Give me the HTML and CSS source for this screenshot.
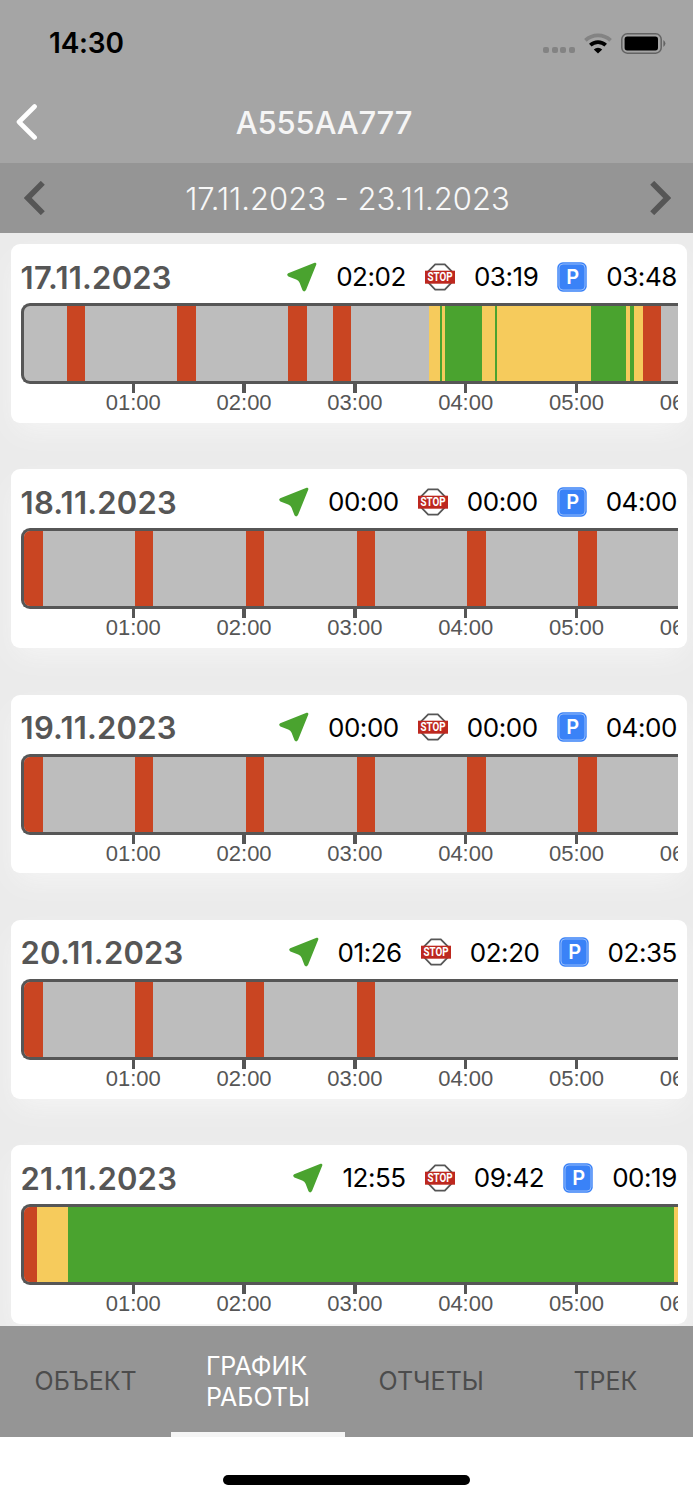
FILE: index.html
```html
<!DOCTYPE html>
<html lang="ru">
<head>
  <meta charset="UTF-8" />
  <meta name="viewport" content="width=device-width, initial-scale=1.0"/>
  <title>График работы</title>
  <link rel="stylesheet" href="styles.css">
</head>
<body>
  <header class="header">
    <div class="status-bar">
      <span class="clock">14:30</span>
      <div class="status-icons">
        <div class="signal"><i></i><i></i><i></i><i></i></div>
        <svg class="wifi" width="28" height="21" viewBox="0 0 28 21">
          <path d="M1.4 7.4 A18.3 18.3 0 0 1 26.6 7.4" fill="none" stroke="#838383" stroke-width="3.7"/>
          <path d="M6.3 12.1 A11.3 11.3 0 0 1 21.7 12.1" fill="none" stroke="#000" stroke-width="3.7"/>
          <path d="M14 20.6 L9.8 16.5 A6.2 6.2 0 0 1 18.2 16.5 Z" fill="#000"/>
        </svg>
        <svg class="battery" width="46" height="21" viewBox="0 0 46 21">
          <rect x="0.8" y="0.8" width="39.4" height="19.4" rx="5.5" fill="none" stroke="#636363" stroke-width="1.5"/>
          <rect x="3.6" y="3.6" width="33.4" height="13.8" rx="2.6" fill="#000"/>
          <path d="M42.4 7 Q46.4 10.5 42.4 14 Z" fill="#636363"/>
        </svg>
      </div>
    </div>
    <div class="title-bar">
      <svg class="back" width="22" height="36" viewBox="0 0 22 36">
        <path d="M18.6 2.5 L3 18 L18.6 33.5" fill="none" stroke="#fff" stroke-width="4.6" stroke-linecap="round" stroke-linejoin="round"/>
      </svg>
      <h1>A555AA777</h1>
    </div>
  </header>

  <div class="date-bar">
    <svg width="21" height="34" viewBox="0 0 21 34">
      <path d="M18.8 1.8 L3.8 17 L18.8 32.2" fill="none" stroke="#565656" stroke-width="5.6"/>
    </svg>
    <span class="period">17.11.2023 - 23.11.2023</span>
    <svg width="21" height="34" viewBox="0 0 21 34">
      <path d="M2.2 1.8 L17.2 17 L2.2 32.2" fill="none" stroke="#565656" stroke-width="5.6"/>
    </svg>
  </div>

  <main class="days" id="days"></main>

  <nav class="tabs">
    <a class="tab"><span>ОБЪЕКТ</span></a>
    <a class="tab active"><span>ГРАФИК<br>РАБОТЫ</span></a>
    <a class="tab"><span>ОТЧЕТЫ</span></a>
    <a class="tab"><span>ТРЕК</span></a>
  </nav>
  <footer class="home"><div class="home-indicator"></div></footer>

  <script>
    // segments: [state, width in px], the rest of the bar stays grey
    const hourly = ["off", 92.3];
    const days = [
      { date: "17.11.2023", move: "02:02", stop: "03:19", park: "03:48", segments: [
        ["off", 43.1], ["alarm", 18.5], ["off", 92.3], ["alarm", 18.5], ["off", 92.3], ["alarm", 18.5],
        ["off", 25.9], ["alarm", 18.5], ["off", 77.6], ["stop", 11.1], ["move", 1.7], ["stop", 3.7],
        ["move", 37], ["stop", 12.6], ["move", 2], ["stop", 94.4], ["move", 34.9], ["stop", 3.8],
        ["move", 3.6], ["stop", 9.3], ["alarm", 18.5]
      ] },
      { date: "18.11.2023", move: "00:00", stop: "00:00", park: "04:00", segments: [
        ["alarm", 19.1], hourly, ["alarm", 18.5], hourly, ["alarm", 18.5], hourly,
        ["alarm", 18.5], hourly, ["alarm", 18.5], hourly, ["alarm", 18.5]
      ] },
      { date: "19.11.2023", move: "00:00", stop: "00:00", park: "04:00", segments: [
        ["alarm", 19.1], hourly, ["alarm", 18.5], hourly, ["alarm", 18.5], hourly,
        ["alarm", 18.5], hourly, ["alarm", 18.5], hourly, ["alarm", 18.5]
      ] },
      { date: "20.11.2023", move: "01:26", stop: "02:20", park: "02:35", segments: [
        ["alarm", 19.1], hourly, ["alarm", 18.5], hourly, ["alarm", 18.5], hourly, ["alarm", 18.5]
      ] },
      { date: "21.11.2023", move: "12:55", stop: "09:42", park: "00:19", segments: [
        ["alarm", 13.4], ["stop", 31.2], ["move", 605.6], ["stop", 20]
      ] }
    ];

    const icons = {
      move: `<svg class="icon" viewBox="0 0 30 30"><path d="M1.2 11.3 L27.6 .8 Q29.7 .4 29.3 2.6 L19 28 Q17.2 30.6 15.5 28.3 L12.6 20.8 Q11.6 18.2 9.2 17.4 L1.4 14.4 Q-.9 12.8 1.2 11.3 Z" fill="#4aa32f"/></svg>`,
      stop: `<svg class="icon" viewBox="0 0 30 30"><path d="M10.2 2.3 H19.8 L27 9.5 V20.2 L19.8 27.6 H10.2 L3 20.2 V9.5 Z" fill="#fff" stroke="#565656" stroke-width="1.8"/><rect x="0" y="8.7" width="30" height="13" fill="#bd281f"/><text class="stop-text" x="15" y="19.4" textLength="25" lengthAdjust="spacingAndGlyphs">STOP</text></svg>`,
      park: `<svg class="icon" viewBox="0 0 30 30"><rect x=".3" y=".3" width="29.4" height="29.4" rx="5.5" fill="#3a82f7"/><rect x="2" y="2" width="26" height="26" rx="4" fill="none" stroke="#a9c9fc" stroke-width=".8"/><text class="park-text" x="15.6" y="22">P</text></svg>`
    };

    const hours = ["01:00", "02:00", "03:00", "04:00", "05:00", "06:00"];

    document.getElementById("days").innerHTML = days.map(day => `
      <section class="card">
        <div class="card-head">
          <h2>${day.date}</h2>
          <div class="stats">
            ${icons.move}<span>${day.move}</span>
            ${icons.stop}<span>${day.stop}</span>
            ${icons.park}<span>${day.park}</span>
          </div>
        </div>
        <div class="chart">
          <div class="bar">${day.segments.map(([state, width]) =>
            `<div class="segment ${state}" style="width: ${width}px"></div>`).join("")}</div>
          <div class="scale">${hours.map(hour => `<div class="hour">${hour}</div>`).join("")}</div>
        </div>
      </section>`).join("");
  </script>
</body>
</html>
```
FILE: styles.css
```css
body {
  margin: 0;
  width: 693px;
  height: 1500px;
  display: flex;
  flex-direction: column;
  overflow: hidden;
  background-color: #ffffff;
  font-family: Inter, "Liberation Sans", sans-serif;
}

h1, h2 {
  margin: 0;
}

.header {
  height: 163px;
  flex: none;
  background-color: #a5a5a5;
}

.status-bar {
  display: flex;
  justify-content: space-between;
  align-items: center;
  height: 86px;
  padding: 0 26px 0 49px;
  box-sizing: border-box;
}

.clock {
  font-size: 28px;
  font-weight: 600;
  letter-spacing: -0.2px;
}

.status-icons {
  display: flex;
  align-items: center;
}

.signal {
  display: flex;
  gap: 2.7px;
  margin: 14px 9px 0 0;
}

.signal i {
  width: 6px;
  height: 6px;
  border-radius: 2px;
  background-color: #838383;
}

.wifi {
  margin-right: 9px;
}

.title-bar {
  display: grid;
  grid-template-columns: 37px 1fr 98px;
  align-items: center;
  height: 72px;
  padding-left: 16px;
}

h1 {
  text-align: center;
  font-size: 31px;
  font-weight: 500;
  letter-spacing: -0.2px;
  color: #f5f5f5;
}

.date-bar {
  display: flex;
  justify-content: space-between;
  align-items: center;
  flex: none;
  height: 70px;
  padding: 0 22px 0 24px;
  box-sizing: border-box;
  background-color: #959595;
}

.period {
  font-size: 31px;
  font-weight: 300;
  color: #f8f8f8;
}

.days {
  display: flex;
  flex-direction: column;
  gap: 46.5px;
  flex: none;
  height: 1093px;
  padding: 11px 6px 0 11.3px;
  box-sizing: border-box;
  overflow: hidden;
  background-color: #ebebeb;
}

.card {
  flex: none;
  height: 178.8px;
  padding: 0 9.3px;
  box-sizing: border-box;
  border-radius: 9px;
  background-color: #ffffff;
  box-shadow: 0 12px 28px -6px #f6f6f6;
}

.card-head {
  display: flex;
  justify-content: space-between;
  align-items: center;
  height: 59px;
  padding-top: 6px;
  box-sizing: border-box;
}

h2 {
  padding-top: 1px;
  font-size: 31px;
  font-weight: 600;
  letter-spacing: 0.2px;
  color: #565656;
}

.stats {
  display: flex;
  align-items: center;
  color: #000000;
  font-size: 26px;
  letter-spacing: -0.45px;
}

.stats span {
  margin: 0 19px;
}

.stats span:last-child {
  margin-right: 0.8px;
}

.icon {
  width: 30px;
  height: 30px;
}

.stop-text {
  fill: #ffffff;
  font: bold 13.5px Roboto, sans-serif;
  letter-spacing: 0;
  text-anchor: middle;
}

.park-text {
  fill: #ffffff;
  font-size: 20px;
  font-weight: 600;
  text-anchor: middle;
}

.chart {
  overflow: hidden;
}

.bar {
  display: flex;
  height: 81px;
  box-sizing: border-box;
  border: 3px solid #565656;
  border-right: 0;
  border-radius: 9px 0 0 9px;
  background-color: #bdbdbd;
  overflow: hidden;
}

.segment {
  flex: none;
}

.alarm {
  background-color: #c94522;
}

.stop {
  background-color: #f6cb5c;
}

.move {
  background-color: #4aa32f;
}

.scale {
  display: flex;
  padding-left: 57.3px;
}

.hour {
  flex: none;
  width: 110.8px;
  font-family: "Liberation Sans", sans-serif;
  font-size: 22px;
  line-height: 20px;
  padding-bottom: 6px;
  text-align: center;
  color: #565656;
}

.hour::before {
  content: "";
  display: block;
  width: 3.4px;
  height: 9px;
  margin: 0 auto;
  background-color: #565656;
}

.tabs {
  display: grid;
  grid-template-columns: 171.3px 173.3px 173.3px 1fr;
  flex: none;
  height: 111px;
  background-color: #959595;
}

.tab {
  display: flex;
  justify-content: center;
  align-items: center;
  box-sizing: border-box;
  border: 0 solid #f5f5f5;
  font-size: 25px;
  line-height: 31px;
  color: #4c4c4c;
}

.tab.active {
  padding-top: 5px;
  border-bottom-width: 5px;
  color: #ffffff;
}

.home {
  display: flex;
  justify-content: center;
  padding-top: 38px;
}

.home-indicator {
  width: 247px;
  height: 10px;
  border-radius: 5px;
  background-color: #000000;
}
```
